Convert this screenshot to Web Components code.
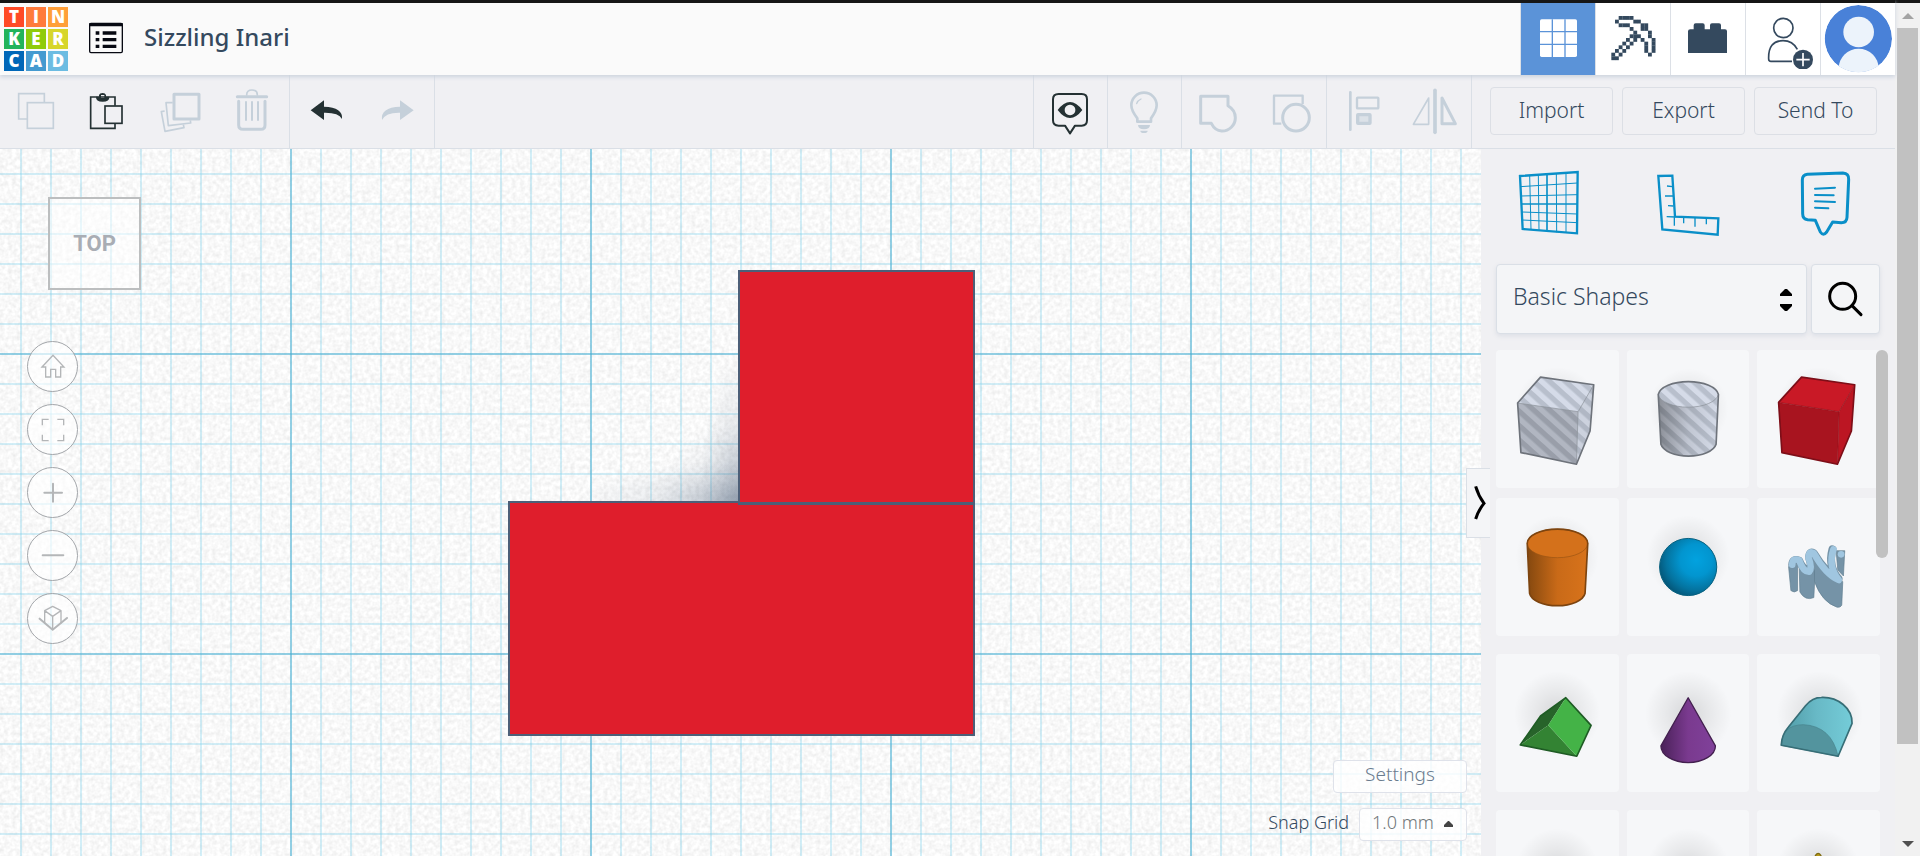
<!DOCTYPE html>
<html lang="en">
<head>
<meta charset="utf-8">
<title>Sizzling Inari - Tinkercad</title>
<style>
html, body { margin: 0; }
body { font-family: "Noto Sans", "Open Sans", sans-serif; color: #34495e; background: #f0f0f3; overflow: hidden; }
</style>
</head>
<body>
<tc-app></tc-app>
<script>
const base = `<style>
*{box-sizing:border-box}
button,select{font:inherit;color:inherit;margin:0;padding:0;border:0;background:none;border-radius:0}
svg{display:block;flex:none}
</style>`;

const stroke = (c, w) => `fill="none" stroke="${c}" stroke-width="${w}"`;
const dim = '#c5d0da', dark = '#243133', blue = '#0a8fc8', navy = '#34495e';

const pickRows = [
  '..####......',
  '.#....##....',
  '..###...##..',
  '.....#..##..',
  '......#...#.',
  '.....###..#.',
  '....#.#.#..#',
  '...#.#...#.#',
  '..#.#....#.#',
  '.#.#.....#.#',
  '#.#.......#.',
  '##..........',
];
const pick = () => pickRows.map((r, y) => [...r].map((c, x) =>
  c === '#' ? `<rect x="${394 + x * 11}" y="${50 + y * 11}" width="11.5" height="11.5"/>` : '').join('')).join('');

/* name: [size, viewBox, markup] */
const icons = {
  copy: [54, '27 252 162 162', `<g ${stroke(dim, 5)}><path d="M82 357H56V281H133V307"/><rect x="82" y="308" width="78" height="77"/></g>`],
  paste: [54, '243 252 162 162', `<g ${stroke(dark, 5)}><path d="M345 317V291H272V385H345V371"/><rect x="315" y="318" width="51" height="52"/></g><path fill="${dark}" fill-rule="evenodd" d="M288 290H297V285Q299 279 308 279Q316 279 318 285V290H328Q329 305 308 305Q287 305 288 290ZM303 285V294H313V285Z"/>`],
  duplicate: [54, '459 252 162 162', `<g stroke-linejoin="round" ${stroke(dim, 5)}><path d="M494 333L484 335L495 394L552 383L550 374"/><path d="M518 308H498L505 377L572 369L571 361"/><rect x="522" y="283" width="75" height="74" stroke-width="9"/></g>`],
  trash: [54, '675 252 162 162', `<g stroke-linecap="round" ${stroke(dim, 9)}><path d="M712 290H800"/><path stroke-width="5" d="M740 285Q740 270 756 270T772 285"/><path d="M716 304V375Q716 388 729 388H783Q795 388 795 375V304"/><path stroke-width="6" d="M738 306V360M756 306V360M774 306V360"/></g>`],
  undo: [54, '897 252 162 162', `<path fill="${dark}" d="M932 331L972 301V320Q1030 322 1026 357Q1016 337 972 338V360Z"/>`],
  redo: [54, '1113 252 162 162', `<path fill="${dim}" d="M1241 331L1200 301V320Q1141 322 1146 360Q1157 337 1200 338V360Z"/>`],
  eye: [54, '69 42 162 162', `<path stroke-linejoin="round" ${stroke(dark, 6)} d="M116 72H185Q201 72 201 88V151Q201 167 185 167H165L150 190L135 167H116Q99 167 99 151V88Q99 72 116 72Z"/><path fill="${dark}" fill-rule="evenodd" d="M113 120Q150 72 187 120Q150 168 113 120ZM150 104a16 16 0 1 0 .1 0Z"/>`],
  bulb: [54, '291 42 162 162', `<g stroke-linecap="round" ${stroke(dim, 8)}><path stroke-linejoin="round" d="M352 155V145Q334 122 334 106A38 38 0 0 1 410 106Q410 122 393 145V155Z"/><path stroke-width="4" d="M350 101Q353 91 363 87"/></g><path fill="${dim}" d="M354 165H390Q389 178 372 178T354 165ZM361 182H383Q383 189 372 189T361 182Z"/>`],
  group: [54, '513 42 162 162', `<path stroke-linejoin="round" ${stroke(dim, 9)} d="M542 79H624V107Q646 120 646 143A40 40 0 0 1 605 183Q585 182 574 160H542Z"/>`],
  ungroup: [54, '729 42 162 162', `<g stroke-linejoin="round" ${stroke(dim, 7)}><path d="M784 161H762V77H848V102"/><circle cx="828" cy="143" r="40" stroke-width="9"/></g>`],
  align: [54, '948 42 162 162', `<path stroke-linecap="round" ${stroke(dim, 8)} d="M991 67V179"/><rect x="1011" y="83" width="64" height="32" rx="2" ${stroke(dim, 7)}/><rect x="1013" y="134" width="37" height="26" rx="1" fill="#dce2e8" stroke="${dim}" stroke-width="10"/>`],
  mirror: [54, '1164 42 162 162', `<g stroke-linejoin="round" stroke-linecap="round" ${stroke(dim, 5)}><path stroke-width="11" d="M1245 61V187"/><path d="M1226 84V163H1180Z"/><path stroke-width="9" d="M1266 84V161H1306Z"/></g>`],

  grid: [60, '144 29 180 180', `<rect x="180" y="60" width="111" height="113" rx="5" fill="#fff"/><path ${stroke('#5b93d8', 4)} d="M217 60V173M255 60V173M180 97H291M180 135H291"/>`],
  pick: [60, '369 29 180 180', `<g fill="${navy}">${pick()}</g>`],
  brick: [60, '594 29 180 180', `<path fill="${navy}" d="M624 161V96Q624 90 631 90H641V78Q641 72 647 72H668Q674 72 674 78V90H690V78Q690 72 696 72H717Q723 72 723 78V90H735Q741 90 741 96V161Z"/>`],
  invite: [60, '819 29 180 180', `<g ${stroke(navy, 5)}><circle cx="910" cy="86" r="29"/><path d="M936 186H873Q866 186 866 179Q864 124 909 124Q938 124 952 150"/></g><circle cx="969" cy="181" r="30" fill="${navy}"/><path ${stroke('#fff', 5)} d="M949 181H989M969 161V201"/>`],
  avatar: [69, '1032 14 207 207', `<defs><clipPath id="c"><circle cx="1135" cy="115" r="101"/></clipPath></defs><g clip-path="url(#c)"><circle cx="1135" cy="115" r="101" fill="#4981d8"/><circle cx="1136" cy="95" r="46" fill="#ecf3fb"/><ellipse cx="1136" cy="204" rx="60" ry="59" fill="#ecf3fb"/></g>`],
  list: [36, '264 63 108 102', `<rect x="269" y="67" width="98" height="88" rx="4" ${stroke('#070912', 4)}/><path fill="#070912" d="M268 66H368V76H268ZM287 91H298V101H287ZM308 91H349V101H308ZM287 111H298V121H287ZM308 111H349V121H308ZM287 131H298V141H287ZM308 131H349V141H308Z"/>`],

  workplane: [70, '165 58 210 210', `<g ${stroke(blue, 3)}><path d="M209 77L213 240M235 76L237 242M289 72L290 248M318 69L318 250M181 111L352 100M183 139L352 135M187 187L352 193M187 211L352 219"/><path stroke-width="5" d="M261 74V246M185 163H352"/><path stroke-width="7" d="M180 79L353 67L351 251L188 238Z"/></g>`],
  ruler: [70, '579 58 210 210', `<g ${stroke(blue, 7)}><path d="M595 79L637 78L645 201L775 206L773 255L607 239Z"/><path stroke-width="4" d="M621 109L638 111M615 139L640 139M624 168L640 169M620 201L646 202M643 200V228M671 203V221M705 204V231M739 206V224"/></g>`],
  note: [70, '993 58 210 210', `<g stroke-linejoin="round" stroke-linecap="round" ${stroke(blue, 9)}><path d="M1042 74L1149 70Q1167 71 1166 89L1161 203Q1160 219 1144 219L1118 217L1100 247Q1090 260 1081 247L1066 212L1043 210Q1028 208 1028 192L1027 91Q1027 76 1042 74Z"/><path stroke-width="6" d="M1065 117L1125 114M1065 136L1121 137M1065 155L1125 157M1065 174L1105 176"/></g>`],
  search: [42, '1094 384 126 126', `<g stroke-linecap="round" ${stroke('#000', 9)}><circle cx="1147" cy="439" r="39"/><path d="M1175 467L1202 494"/></g>`],

  home: [28, '117 517 84 84', `<path ${stroke('#b4b6b8', 4)} d="M126 559L159 524L192 559H182V589H167V566H152V589H137V559Z"/>`],
  fit: [28, '117 705 84 84', `<path ${stroke('#b4b6b8', 4)} d="M127 733V715H146M172 715H191V733M191 761V779H172M146 779H127V761"/>`],
  plus: [28, '117 895 84 84', `<path stroke-linecap="round" ${stroke('#b4b6b8', 6)} d="M133 936H186M159 909V963"/>`],
  minus: [28, '117 1085 84 84', `<path stroke-linecap="round" ${stroke('#b4b6b8', 6)} d="M128 1125H190"/>`],
  persp: [30, '112 1271 90 90', `<g stroke-linejoin="round" stroke-linecap="round" ${stroke('#b4b6b8', 4)}><path d="M156 1278L181 1291L156 1308L132 1291ZM132 1291V1328M181 1291V1328M156 1308V1345"/><path stroke-width="6" d="M117 1315L156 1348L199 1313"/></g>`],
  chevron: [20, '31 430 60 120', `<path ${stroke('#000', 9)} d="M48 440Q56 468 73 491Q56 512 48 538"/>`],
};

const defs = {
  stripes: `<pattern id="s" width="40" height="32" patternUnits="userSpaceOnUse" patternTransform="rotate(42)"><rect width="40" height="32" fill="#d5dbe8"/><rect width="40" height="16" fill="#b8bfcc"/></pattern>`,
  glow: `<radialGradient id="g"><stop offset="0" stop-color="#000" stop-opacity=".13"/><stop offset=".5" stop-color="#000" stop-opacity=".06"/><stop offset="1" stop-color="#000" stop-opacity="0"/></radialGradient>`,
};
const glow = (x, y, r) => `<circle cx="${x}" cy="${y}" r="${r}" fill="url(#g)"/>`;
const shade = (id, a, b, c) => `<linearGradient id="${id}"><stop offset="0" stop-color="${a}"/><stop offset=".5" stop-color="${b}"/><stop offset="1" stop-color="${c}"/></linearGradient>`;

/* name: [viewBox, label, markup] */
const shapes = {
  boxHole: ['108 30 369 414', 'Box hole', `${glow(292, 205, 125)}<path fill="url(#s)" d="M173 189L242 111L402 134L391 273L350 373L183 338Z"/><path fill="#000" opacity=".17" d="M173 189L355 215L350 373L183 338Z"/><path fill="#000" opacity=".04" d="M355 215L402 134L391 273L350 373Z"/><path ${stroke('#8a8f97', 2)} d="M173 189L355 215L402 134M355 215L350 373"/><path ${stroke('#6e737b', 5)} stroke-linejoin="round" d="M173 189L242 111L402 134L391 273L350 373L183 338Z"/>`],
  cylHole: ['500 30 369 414', 'Cylinder hole', `<defs>${shade('h', '#00000058', '#00000018', '#00000000')}</defs>${glow(685, 205, 120)}<path fill="url(#s)" d="M594 163A91 43 0 0 1 775 163L768 313A84 42 0 0 1 602 313Z"/><path fill="url(#h)" d="M594 163A91 43 0 0 0 775 163L768 313A84 42 0 0 1 602 313Z"/><path ${stroke('#8a8f97', 2)} d="M594 163A91 43 0 0 0 775 163"/><path ${stroke('#6e737b', 5)} d="M594 163A91 43 0 0 1 775 163L768 313A84 42 0 0 1 602 313Z"/>`],
  box: ['891 30 369 414', 'Box', `${glow(1075, 205, 125)}<path fill="#a8141f" d="M956 187L1138 215L1133 373L966 338Z"/><path fill="#c91926" d="M956 187L1025 111L1185 134L1138 215Z"/><path fill="#bc1623" d="M1138 215L1185 134L1175 273L1133 373Z"/><path ${stroke('#8c101a', 2)} d="M956 187L1138 215L1133 373M1138 215L1185 134"/><path ${stroke('#7d0e18', 5)} stroke-linejoin="round" d="M956 187L1025 111L1185 134L1175 273L1133 373L966 338Z"/>`],
  cyl: ['108 474 369 414', 'Cylinder', `<defs>${shade('o', '#84480f', '#c96a18', '#d8731b')}</defs>${glow(292, 650, 125)}<path fill="url(#o)" d="M202 610A91 43 0 0 1 384 610L376 760A84 42 0 0 1 209 760Z"/><path fill="#d4711b" stroke="#9a5413" stroke-width="2" d="M202 610A91 43 0 0 0 384 610A91 43 0 0 0 202 610Z"/><path ${stroke('#7d440f', 5)} d="M202 610A91 43 0 0 1 384 610L376 760A84 42 0 0 1 209 760Z"/>`],
  sphere: ['500 474 369 414', 'Sphere', `<defs><radialGradient id="b" cx=".64" cy=".38" r=".7"><stop offset="0" stop-color="#02a2df"/><stop offset=".4" stop-color="#0295cf"/><stop offset=".75" stop-color="#04739f"/><stop offset="1" stop-color="#045273"/></radialGradient></defs>${glow(684, 650, 125)}<circle cx="684" cy="681" r="86" fill="url(#b)" stroke="#06607f" stroke-width="3"/>`],
  scribble: ['891 474 369 414', 'Scribble', `<g fill="#7593a7" stroke="#5f7d90" stroke-width="2"><path d="M986 680L993 752Q1003 760 1013 752V672Z"/><path d="M1018 684L1020 756Q1036 784 1062 773L1066 690Z"/><path d="M1064 655V725Q1086 787 1132 802Q1142 804 1146 796L1149 725Z"/><path d="M1129 632H1155L1151 708L1134 690Z"/></g><path stroke-linejoin="round" stroke-linecap="round" ${stroke('#7593a7', 24)} d="M997 674Q998 654 1018 662Q1030 692 1050 690Q1058 684 1048 654Q1047 632 1062 640Q1098 700 1137 717Q1104 680 1118 628"/><path stroke-linejoin="round" stroke-linecap="round" ${stroke('#a0c6e0', 20)} d="M997 674Q998 652 1018 661Q1030 696 1048 695Q1058 684 1046 654Q1047 630 1062 640Q1098 704 1137 720Q1104 680 1121 628"/><circle cx="1144" cy="643" r="10" fill="#a0c6e0"/>`],
  roof: ['108 42 369 414', 'Roof', `${glow(292, 222, 130)}<path fill="#27632a" d="M181 315L242 228L318 173L265 256Z"/><path fill="#338333" d="M181 315L265 256L351 349Z"/><path fill="#44b347" d="M265 256L318 173L394 256L351 349Z"/><path ${stroke('#1f5c25', 5)} stroke-linejoin="round" d="M181 315L242 228L318 173L394 256L351 349Z"/>`],
  cone: ['500 42 369 414', 'Cone', `<defs>${shade('p', '#4a2159', '#7a3a8f', '#80419a')}</defs>${glow(684, 222, 130)}<path fill="url(#p)" stroke="#43204f" stroke-width="4" stroke-linejoin="round" d="M684 173L766 318A82 50 0 0 1 602 318Z"/>`],
  round: ['891 42 369 414', 'Round roof', `<defs>${shade('t', '#4f9aa5', '#68b9c6', '#74ccd8')}</defs>${glow(1080, 222, 130)}<path fill="url(#t)" d="M964 316Q965 285 985 262L1037 197Q1058 172 1085 172C1135 170 1178 205 1177 250L1135 349Z"/><path fill="#53949e" stroke="#458089" stroke-width="2" d="M964 316Q966 255 1030 254Q1115 258 1135 349Z"/><path ${stroke('#376e77', 5)} stroke-linejoin="round" d="M964 316Q965 285 985 262L1037 197Q1058 172 1085 172C1135 170 1178 205 1177 250L1135 349Z"/>`],
  text: ['108 510 369 414', 'Text', glow(292, 690, 125)],
  wedge: ['500 510 369 414', 'Wedge', glow(684, 690, 125)],
  pyramid: ['891 510 369 414', 'Pyramid', `${glow(1075, 690, 125)}<path fill="#b89a18" stroke="#7d6a12" stroke-width="4" stroke-linejoin="round" d="M1067 646Q1075 634 1083 646L1140 800H1010Z"/>`],
};

function define(name, html, extra) {
  const t = document.createElement('template');
  t.innerHTML = base + html;
  customElements.define(name, class extends HTMLElement {
    constructor() {
      super();
      this.attachShadow({ mode: 'open' }).append(t.content.cloneNode(true));
    }
    connectedCallback() { if (extra) extra(this, this.shadowRoot); }
  });
}

define('tc-icon', `<style>:host{display:block;flex:none}</style><div></div>`, (el, root) => {
  const [size, box, body] = icons[el.getAttribute('name')];
  const [, , w, h] = box.split(' ');
  root.querySelector('div').innerHTML =
    `<svg width="${size}" height="${Math.round(size * h / w)}" viewBox="${box}" aria-hidden="true">${body}</svg>`;
});

define('tc-logo', `<style>
:host{display:block;flex:none}
a{display:grid;grid-template-columns:repeat(3,20px);grid-auto-rows:20px;gap:2px;text-decoration:none}
b{display:grid;place-items:center;color:#fff;font:800 17px/20px "Open Sans","Noto Sans",sans-serif}
</style><a href="#" aria-label="Tinkercad"></a>`, (el, root) => {
  const colors = ['#ff4a26', '#ff7b3c', '#ff9f39', '#22b45b', '#8fcb0a', '#d7d62b', '#0067b8', '#449ad0', '#6cbce2'];
  root.querySelector('a').innerHTML = [...'TINKERCAD'].map((c, i) => `<b style="background:${colors[i]}">${c}</b>`).join('');
});

define('tc-header', `<style>
:host{display:flex;height:75px;background:#fafafa;border-top:3px solid #161616;box-shadow:0 2px 4px #ccd3de;position:relative;z-index:3;align-items:center}
tc-logo{margin-left:4px}
.list{margin-left:20px}
h1{font-size:24px;line-height:32px;font-weight:500;margin:0 auto 0 20px;padding-bottom:4px}
nav{display:flex;height:72px}
nav button{width:75px;display:grid;place-items:center;background:#fff;border-left:1px solid #dce0e6}
nav .on{background:#5b93d8}
</style>
<tc-logo></tc-logo>
<button class="list" aria-label="Designs"><tc-icon name="list"></tc-icon></button>
<h1>Sizzling Inari</h1>
<nav>
<button class="on" aria-label="3D view"><tc-icon name="grid"></tc-icon></button>
<button aria-label="Blocks"><tc-icon name="pick"></tc-icon></button>
<button aria-label="Bricks"><tc-icon name="brick"></tc-icon></button>
<button aria-label="Invite people"><tc-icon name="invite"></tc-icon></button>
<button aria-label="Account"><tc-icon name="avatar"></tc-icon></button>
</nav>`);

define('tc-tool', `<style>:host{display:block}button{width:72px;height:72px;display:grid;place-items:center}</style>
<button></button>`, (el, root) => {
  const n = el.getAttribute('name'), b = root.querySelector('button');
  b.setAttribute('aria-label', n);
  b.innerHTML = `<tc-icon name="${n}"></tc-icon>`;
});

define('tc-toolbar', `<style>
:host{display:flex;height:74px;border-bottom:1px solid #dadfe6;background:#f0f0f3}
.g{display:flex;border-left:1px solid #dadfe6}
.first{border-left:0}
.first,.one{padding-right:1px}
.end{border-right:1px solid #dadfe6}
.fill{flex:1}
.files{width:424px;padding:12px 18px 0;display:grid;grid-template-columns:repeat(3,1fr);gap:9px;border-left:1px solid #dadfe6}
.files button{height:48px;border:1px solid #dcdfe5;border-radius:4px;font-size:21px;font-weight:300;line-height:28px;padding-bottom:2px}
</style>
<div class="g first"><tc-tool name="copy"></tc-tool><tc-tool name="paste"></tc-tool><tc-tool name="duplicate"></tc-tool><tc-tool name="trash"></tc-tool></div>
<div class="g end"><tc-tool name="undo"></tc-tool><tc-tool name="redo"></tc-tool></div>
<div class="fill"></div>
<div class="g one"><tc-tool name="eye"></tc-tool></div>
<div class="g one"><tc-tool name="bulb"></tc-tool></div>
<div class="g"><tc-tool name="group"></tc-tool><tc-tool name="ungroup"></tc-tool></div>
<div class="g"><tc-tool name="align"></tc-tool><tc-tool name="mirror"></tc-tool></div>
<div class="files"><button>Import</button><button>Export</button><button>Send To</button></div>`);

define('tc-canvas', `<style>
:host{display:block;position:relative;overflow:hidden;background:#fafafa}
.noise,.grid{position:absolute;inset:0;width:100%;height:100%}
.grid{--m:#41a8cc70;--n:#7fd0ea58;
background:
linear-gradient(90deg,var(--m) 2px,transparent 2px) 290px 0/300px 300px,
linear-gradient(var(--m) 2px,transparent 2px) 0 204px/300px 300px,
linear-gradient(90deg,var(--n) 2px,transparent 2px) 20px 0/30px 30px,
linear-gradient(var(--n) 2px,transparent 2px) 0 24px/30px 30px}
.shade,.solid{position:absolute}
.solid{background:#df1e2c;border:2px solid #4d5f78}
.base{left:508px;top:352px;width:467px;height:235px}
.cube{left:738px;top:121px;width:237px;height:235px;border-bottom-width:3px}
.shade{left:568px;top:189px;width:170px;height:163px;overflow:hidden}
.shade::before{content:"";position:absolute;inset:0;background:radial-gradient(ellipse 160px 40px at 100% 100%,#4a5f7a48,#4a5f7a18 55%,transparent),radial-gradient(ellipse 38px 150px at 100% 100%,#4a5f7a48,#4a5f7a18 55%,transparent),radial-gradient(ellipse 80px 80px at 100% 100%,#4a5f7a30,transparent)}
.view{position:absolute;left:48px;top:48px;width:93px;height:93px;border:2px solid #bcbebf;background:#ffffff80;font:700 22px/30px Roboto,sans-serif;color:#a9adb4}
.nav{position:absolute;left:27px;top:192px;display:grid;gap:12px}
.nav button{width:51px;height:51px;border:1px solid #a3a6aa;border-radius:50%;background:#ffffffa0;display:grid;place-items:center}
.opts{position:absolute;right:14px;bottom:15px;display:grid;gap:15px;justify-items:end;font-size:18px;line-height:24px;font-weight:300}
.opts button,.opts select{height:33px;border:1px solid #dfe2ea;border-radius:4px;background:#ffffffcc}
.opts button{width:134px;color:#6b7c8f;padding-bottom:5px;font-size:19px}
.row{display:flex;align-items:center;gap:10px}
.row label{padding-bottom:5px}
.snap{position:relative;display:flex}
select{appearance:none;width:108px;padding:0 0 5px 12px;color:#6f7679}
.snap svg{position:absolute;right:14px;top:13px;pointer-events:none}
</style>
<svg class="noise" aria-hidden="true"><filter id="n" x="0" y="0" width="100%" height="100%" color-interpolation-filters="sRGB"><feTurbulence type="fractalNoise" baseFrequency=".24" numOctaves="2" seed="4"/><feColorMatrix values=".13 0 0 0 .91 .13 0 0 0 .91 .13 0 0 0 .91 0 0 0 0 1"/></filter><rect width="100%" height="100%" filter="url(#n)"/></svg>
<div class="grid"></div>
<div class="shade"></div>
<div class="solid base"></div>
<div class="solid cube"></div>
<button class="view">TOP</button>
<div class="nav">
<button aria-label="Home view"><tc-icon name="home"></tc-icon></button>
<button aria-label="Fit view"><tc-icon name="fit"></tc-icon></button>
<button aria-label="Zoom in"><tc-icon name="plus"></tc-icon></button>
<button aria-label="Zoom out"><tc-icon name="minus"></tc-icon></button>
<button aria-label="Perspective"><tc-icon name="persp"></tc-icon></button>
</div>
<div class="opts">
<button>Settings</button>
<div class="row"><label for="snap">Snap Grid</label><span class="snap"><select id="snap"><option>1.0 mm</option></select><svg width="9" height="6" viewBox="0 0 9 6"><path fill="#444" d="M0 6V4L4 0H5L9 4V6Z"/></svg></span></div>
</div>`);

define('tc-shape', `<style>
:host{display:block;height:138px}
button{width:100%;height:100%;border-radius:4px;background:#f6f7f9;overflow:hidden}
svg{width:100%;height:138px}
</style><button></button>`, (el, root) => {
  const [box, label, body] = shapes[el.getAttribute('kind')];
  const b = root.querySelector('button');
  b.setAttribute('aria-label', label);
  b.innerHTML = `<svg viewBox="${box}"><defs>${defs.stripes}${defs.glow}</defs>${body}</svg>`;
});

define('tc-panel', `<style>
:host{display:flex;flex-direction:column;position:relative;background:#f0f0f3;min-height:0}
.tools{display:grid;grid-template-columns:repeat(3,1fr);height:115px;padding-bottom:5px}
.tools button{display:grid;place-items:center}
.pick{display:flex;gap:4px;padding:0 15px;height:70px;flex:none}
.pick>*{border:1px solid #dadfe6;border-radius:4px;background:#f4f5f7;box-shadow:0 2px 5px #dcdfe6}
.cat{flex:1;position:relative;display:flex}
select{appearance:none;flex:1;padding:0 0 6px 16px;font-size:23px;font-weight:300}
.cat svg{position:absolute;right:14px;top:24px;pointer-events:none}
.find{width:69px;display:grid;place-items:center}
.list{flex:1;min-height:0;overflow:hidden;margin:16px 15px 0;position:relative}
.rows{display:grid;grid-template-columns:repeat(3,1fr);gap:10px 8px}
.rows+.rows{margin-top:18px;row-gap:18px}
.thumb{position:absolute;right:7px;top:201px;width:12px;height:208px;border-radius:6px;background:#c1c1c1}
.fold{position:absolute;left:-15px;top:319px;width:24px;height:70px;border:1px solid #dadfe6;border-right:0;background:#f4f5f7;display:grid;place-items:center end}
</style>
<div class="tools"><button aria-label="Workplane"><tc-icon name="workplane"></tc-icon></button><button aria-label="Ruler"><tc-icon name="ruler"></tc-icon></button><button aria-label="Notes"><tc-icon name="note"></tc-icon></button></div>
<div class="pick"><div class="cat"><select aria-label="Shape library"><option>Basic Shapes</option></select><svg width="12" height="22" viewBox="0 0 12 22"><path d="M0 7V5L5 0H7L12 5V7ZM0 15V17L5 22H7L12 17V15Z"/></svg></div><button class="find" aria-label="Search shapes"><tc-icon name="search"></tc-icon></button></div>
<div class="list">
<div class="rows"><tc-shape kind="boxHole"></tc-shape><tc-shape kind="cylHole"></tc-shape><tc-shape kind="box"></tc-shape><tc-shape kind="cyl"></tc-shape><tc-shape kind="sphere"></tc-shape><tc-shape kind="scribble"></tc-shape></div>
<div class="rows"><tc-shape kind="roof"></tc-shape><tc-shape kind="cone"></tc-shape><tc-shape kind="round"></tc-shape><tc-shape kind="text"></tc-shape><tc-shape kind="wedge"></tc-shape><tc-shape kind="pyramid"></tc-shape></div>
</div>
<div class="thumb"></div>
<button class="fold" aria-label="Collapse panel"><tc-icon name="chevron"></tc-icon></button>`);

define('tc-scrollbar', `<style>
:host{display:flex;flex-direction:column;align-items:center;width:25px;background:#f1f1f1;border-top:3px solid #161616}
.bar{width:21px;flex:1;background:#c1c1c1}
.a{height:25px;padding-top:10px}
.z{height:112px;display:flex;align-items:end;padding-bottom:9px}
</style>
<div class="a"><svg width="12" height="6" viewBox="0 0 12 6"><path fill="#a3a3a3" d="M0 6L6 0L12 6Z"/></svg></div>
<div class="bar"></div>
<div class="z"><svg width="12" height="6" viewBox="0 0 12 6"><path fill="#505050" d="M0 0H12L6 6Z"/></svg></div>`);

define('tc-app', `<style>
:host{display:flex;height:100vh}
main{flex:1;min-width:0;display:flex;flex-direction:column}
.work{flex:1;min-height:0;display:flex}
tc-canvas{flex:1}
tc-panel{width:414px}
</style>
<main><tc-header></tc-header><tc-toolbar></tc-toolbar><div class="work"><tc-canvas></tc-canvas><tc-panel></tc-panel></div></main>
<tc-scrollbar aria-hidden="true"></tc-scrollbar>`);
</script>
</body>
</html>
